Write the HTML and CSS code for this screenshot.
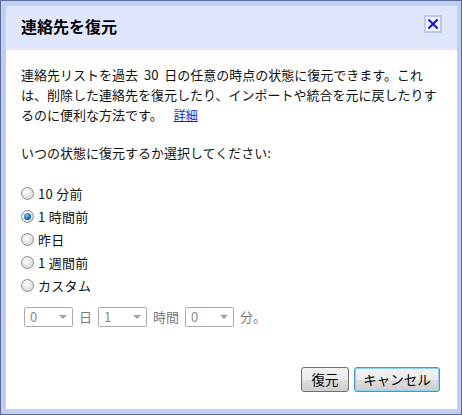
FILE: index.html
```html
<!DOCTYPE html>
<html lang="ja">
<head>
<meta charset="utf-8">
<title>連絡先を復元</title>
<link rel="stylesheet" href="styles.css">
</head>
<body>
<div class="dialog">
  <div class="panel">
    <div class="header">
      <h1 class="title">連絡先を復元</h1>
      <button class="close" aria-label="閉じる">
        <svg width="10" height="10" viewBox="0 0 10 10"><path d="M1.2 1.2 L8.8 8.8 M8.8 1.2 L1.2 8.8" stroke="#1a1ad0" stroke-width="2.2" stroke-linecap="square"/></svg>
      </button>
    </div>
    <div class="body">
      <p class="desc">連絡先リストを過去 30 日の任意の時点の状態に復元できます。これ<br>は、削除した連絡先を復元したり、インポートや統合を元に戻したりす<br>るのに便利な方法です。 <a class="link" href="#">詳細</a></p>
      <p class="question">いつの状態に復元するか選択してください:</p>
      <div class="options">
        <label class="option"><span class="radio"></span>10 分前</label>
        <label class="option"><span class="radio checked"></span>1 時間前</label>
        <label class="option"><span class="radio"></span>昨日</label>
        <label class="option"><span class="radio"></span>1 週間前</label>
        <label class="option"><span class="radio"></span>カスタム</label>
      </div>
      <div class="custom">
        <span class="sel"><span>0</span><span class="caret"></span></span>
        <span class="unit">日</span>
        <span class="sel"><span>1</span><span class="caret"></span></span>
        <span class="unit">時間</span>
        <span class="sel"><span>0</span><span class="caret"></span></span>
        <span class="unit">分。</span>
      </div>
      <div class="actions">
        <button class="btn">復元</button>
        <button class="btn btn-focus">キャンセル</button>
      </div>
    </div>
  </div>
</div>
</body>
</html>
```
FILE: styles.css
```css
* { box-sizing: border-box; }
html, body { margin: 0; padding: 0; background: #fff; }
body {
  font-family: "Noto Sans CJK JP", "Liberation Sans", sans-serif;
  font-size: 13px;
  color: #111;
}
.dialog {
  width: 462px;
  height: 415px;
  border: 1px solid #5d6b8e;
  background: #bfcdf8;
  padding: 5px 4px 5px 5px;
  display: flex;
}
.panel {
  flex: 1;
  min-width: 0;
  background: #fff;
  display: flex;
  flex-direction: column;
}
.header {
  height: 44px;
  background: #e0e7fd;
  display: flex;
  justify-content: space-between;
  align-items: flex-start;
  padding: 0 15px 0 15px;
}
.title {
  margin: 10px 0 0 0;
  font-size: 16px;
  font-weight: bold;
  line-height: 20px;
  color: #000;
}
.close {
  margin-top: 9px;
  width: 18px;
  height: 18px;
  padding: 0;
  border: 2px solid #b9c9f7;
  background: #f4f6ff;
  display: flex;
  align-items: center;
  justify-content: center;
  cursor: pointer;
}
.close svg { display: block; }
.body {
  flex: 1;
  min-width: 0;
  display: flex;
  flex-direction: column;
  padding: 15px 17px 17px 15px;
}
.desc {
  margin: 0;
  line-height: 20px;
  white-space: nowrap;
  word-spacing: 3px;
}
.link {
  margin-left: 5px;
  color: #1a1acc;
  font-size: 12px;
  text-decoration: underline;
}
.question {
  margin: 18px 0 0;
  line-height: 20px;
}
.options {
  margin-top: 19px;
  display: flex;
  flex-direction: column;
}
.option {
  height: 23px;
  display: flex;
  align-items: center;
  gap: 4px;
  line-height: 20px;
  letter-spacing: 0.3px;
}
.radio {
  width: 13px;
  height: 13px;
  border-radius: 50%;
  border: 1px solid #8c8c8c;
  background: radial-gradient(circle at 40% 35%, #fdfdfd 0%, #e2e2e2 60%, #c8c8c8 100%);
  display: flex;
  align-items: center;
  justify-content: center;
}
.radio.checked::after {
  content: "";
  width: 7px;
  height: 7px;
  border-radius: 50%;
  background: radial-gradient(circle at 40% 35%, #7fc4f0 0%, #1a6fb8 55%, #0d3f78 100%);
}
.custom {
  margin-top: 10px;
  padding-left: 3px;
  display: flex;
  align-items: center;
  gap: 6px;
  color: #7a7a7a;
}
.sel {
  width: 49px;
  height: 20px;
  border: 1px solid #ababab;
  border-radius: 2px;
  display: flex;
  align-items: center;
  justify-content: space-between;
  padding: 0 5px 0 5px;
  color: #8a8a8a;
  background: #fff;
  line-height: 18px;
}
.caret {
  width: 0;
  height: 0;
  border-left: 4px solid transparent;
  border-right: 4px solid transparent;
  border-top: 4px solid #a0a0a0;
}
.unit { line-height: 20px; }
.actions {
  margin-top: auto;
  display: flex;
  justify-content: flex-end;
  gap: 5px;
}
.btn {
  height: 25px;
  padding: 0 4px;
  font-family: "Noto Sans CJK JP", "Liberation Sans", sans-serif;
  font-size: 13.5px;
  color: #000;
  border: 1px solid #707070;
  border-radius: 3px;
  background: linear-gradient(#f3f3f3 0%, #ebebeb 50%, #dddddd 51%, #cfcfcf 100%);
  line-height: 21px;
  white-space: nowrap;
}
.btn:first-child { width: 48px; }
.btn-focus {
  width: 86px;
  border-color: #3c9ad6;
  box-shadow: inset 0 0 0 1px #8fd0f3;
}
```
